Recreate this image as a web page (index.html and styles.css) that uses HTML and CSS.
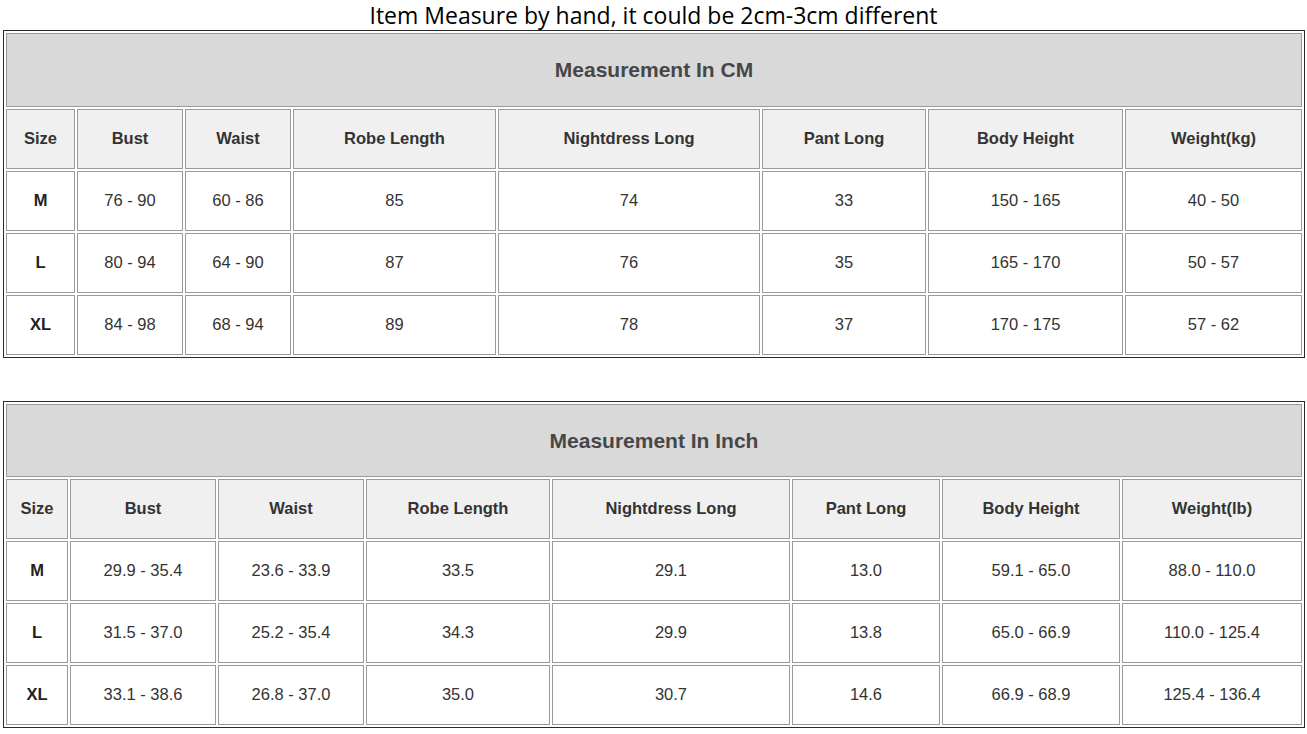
FILE: index.html
```html
<!DOCTYPE html>
<html>
<head>
<meta charset="utf-8">
<link rel="stylesheet" href="styles.css">
</head>
<body>
<div class="note">Item Measure by hand, it could be 2cm-3cm different</div>

<table class="chart chart-cm">
  <colgroup>
    <col style="width:69px"><col style="width:106px"><col style="width:106px"><col style="width:203px"><col style="width:262px"><col style="width:164px"><col style="width:195px"><col style="width:177px">
  </colgroup>
  <tr><td class="title" colspan="8">Measurement In CM</td></tr>
  <tr class="head"><td>Size</td><td>Bust</td><td>Waist</td><td>Robe Length</td><td>Nightdress Long</td><td>Pant Long</td><td>Body Height</td><td>Weight(kg)</td></tr>
  <tr><td class="size">M</td><td>76 - 90</td><td>60 - 86</td><td>85</td><td>74</td><td>33</td><td>150 - 165</td><td>40 - 50</td></tr>
  <tr><td class="size">L</td><td>80 - 94</td><td>64 - 90</td><td>87</td><td>76</td><td>35</td><td>165 - 170</td><td>50 - 57</td></tr>
  <tr><td class="size">XL</td><td>84 - 98</td><td>68 - 94</td><td>89</td><td>78</td><td>37</td><td>170 - 175</td><td>57 - 62</td></tr>
</table>

<table class="chart chart-in">
  <colgroup>
    <col style="width:62px"><col style="width:146px"><col style="width:146px"><col style="width:184px"><col style="width:238px"><col style="width:148px"><col style="width:178px"><col style="width:180px">
  </colgroup>
  <tr><td class="title" colspan="8">Measurement In Inch</td></tr>
  <tr class="head"><td>Size</td><td>Bust</td><td>Waist</td><td>Robe Length</td><td>Nightdress Long</td><td>Pant Long</td><td>Body Height</td><td>Weight(lb)</td></tr>
  <tr><td class="size">M</td><td>29.9 - 35.4</td><td>23.6 - 33.9</td><td>33.5</td><td>29.1</td><td>13.0</td><td>59.1 - 65.0</td><td>88.0 - 110.0</td></tr>
  <tr><td class="size">L</td><td>31.5 - 37.0</td><td>25.2 - 35.4</td><td>34.3</td><td>29.9</td><td>13.8</td><td>65.0 - 66.9</td><td>110.0 - 125.4</td></tr>
  <tr><td class="size">XL</td><td>33.1 - 38.6</td><td>26.8 - 37.0</td><td>35.0</td><td>30.7</td><td>14.6</td><td>66.9 - 68.9</td><td>125.4 - 136.4</td></tr>
</table>
</body>
</html>
```
FILE: styles.css
```css
html, body {
  margin: 0;
  padding: 0;
  background: #ffffff;
}

.note {
  height: 30px;
  line-height: 30px;
  text-align: center;
  font-family: "Open Sans", "Noto Sans", sans-serif;
  font-size: 23px;
  color: #000;
  white-space: nowrap;
}

.chart {
  margin-left: 3px;
  width: 1302px;
  table-layout: fixed;
  border-collapse: separate;
  border-spacing: 2px;
  border: 1px solid #2a2a2a;
  font-family: "Liberation Sans", Arial, sans-serif;
}

.chart-in {
  margin-top: 43px;
}

.chart td {
  box-sizing: border-box;
  border: 1px solid #9a9a9a;
  height: 60px;
  padding: 0 0 2px 0;
  text-align: center;
  vertical-align: middle;
  font-size: 16.5px;
  color: #333;
  background: #fff;
}

.chart td.title {
  height: 74px;
  padding: 0;
  background: #d9d9d9;
  font-size: 21px;
  font-weight: bold;
  color: #474747;
}

.chart-in td.title {
  height: 73px;
}

.chart .head td {
  background: #f0f0f0;
  font-weight: bold;
  color: #333;
}

.chart td.size {
  font-weight: bold;
  color: #222;
}
```
